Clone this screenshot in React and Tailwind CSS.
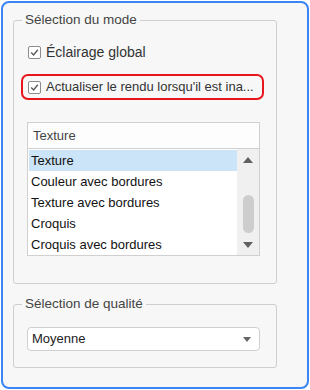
const Check = () => (
  <span className="flex h-[13px] w-[13px] shrink-0 items-center justify-center rounded-[2px] border border-[#8c8c8c] bg-white">
    <svg width="9" height="9" viewBox="0 0 9 9" fill="none">
      <path d="M1.2 4.6 L3.6 7 L7.8 1.8" stroke="#5a5a5a" strokeWidth="1.4" />
    </svg>
  </span>
);

const items = ["Texture", "Couleur avec bordures", "Texture avec bordures", "Croquis", "Croquis avec bordures"];

export default function App() {
  return (
    <div
      className="h-[390px] w-[310px] bg-white p-px text-[13px] text-[#333]"
      style={{ fontFamily: "'Liberation Sans', Arial, sans-serif" }}
    >
      <div className="flex h-full flex-col rounded-lg border-2 border-[#3a84f5] bg-[#f7f7f7] pl-[10px]">
        <fieldset className="mt-[8px] h-[273px] w-[264px] rounded-[3px] border border-[#cfcfcf] p-0">
          <legend className="ml-[8px] px-[3px] text-[13.5px] leading-[18px] text-[#444]">Sélection du mode</legend>
          <div className="mt-[15px] flex items-center gap-[5px] pl-[14px]">
            <Check />
            <span className="text-[14px] leading-[16px]">Éclairage global</span>
          </div>
          <div className="ml-[7px] mt-[14px] flex h-[26px] w-[243px] items-center gap-[5px] rounded-[7px] border-2 border-[#e8161b] pl-[5px]">
            <Check />
            <span className="leading-[16px]">Actualiser le rendu lorsqu'il est ina...</span>
          </div>
          <div className="ml-[13px] mt-[22px] w-[233px] border border-[#d0d0d0] bg-white">
            <div className="flex h-[26px] items-center border-b border-[#d0d0d0] bg-[#fdfdfd] pl-[5px] text-[#444]">Texture</div>
            <div className="flex h-[106px]">
              <div className="flex-1 pl-px pt-px">
                {items.map((it, i) => (
                  <div
                    key={it}
                    className={`flex h-[21px] items-center pl-[2px] text-[#111] ${i === 0 ? "bg-[#cce4f7]" : ""}`}
                  >
                    {it}
                  </div>
                ))}
              </div>
              <div className="flex w-[22px] flex-col items-center bg-[#f0f0f0]">
                <svg className="mt-[8px]" width="10" height="6" viewBox="0 0 10 6">
                  <path d="M0 6 L5 0 L10 6 Z" fill="#606060" />
                </svg>
                <div className="mt-[32px] h-[38px] w-[11px] rounded-full bg-[#cdcdcd]" />
                <svg className="mt-[9px]" width="10" height="6" viewBox="0 0 10 6">
                  <path d="M0 0 L10 0 L5 6 Z" fill="#606060" />
                </svg>
              </div>
            </div>
          </div>
        </fieldset>
        <fieldset className="mt-[11px] h-[73px] w-[264px] rounded-[3px] border border-[#cfcfcf] p-0">
          <legend className="ml-[8px] px-[3px] text-[13.5px] leading-[18px] text-[#444]">Sélection de qualité</legend>
          <div className="ml-[13px] mt-[14px] flex h-[24px] w-[233px] items-center justify-between rounded-[4px] border border-[#cfcfcf] bg-white pl-[4px] pr-[8px] text-[#222]">
            <span>Moyenne</span>
            <svg width="8" height="5" viewBox="0 0 8 5">
              <path d="M0 0 L8 0 L4 5 Z" fill="#666" />
            </svg>
          </div>
        </fieldset>
      </div>
    </div>
  );
}
